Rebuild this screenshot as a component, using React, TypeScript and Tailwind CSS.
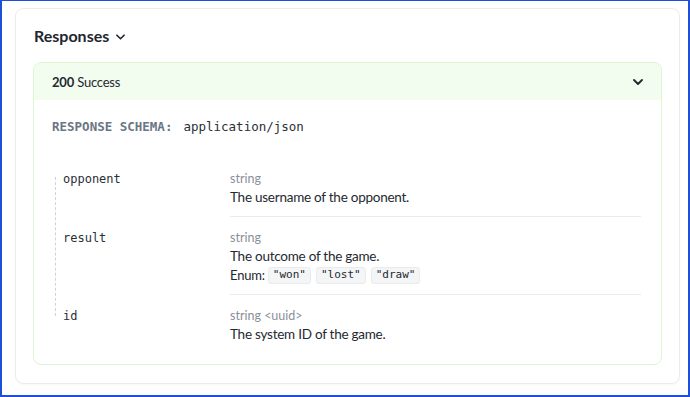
import React from 'react'

interface Field {
  name: string;
  type: string;
  format?: string;
  description: string;
  enumValues?: string[];
}

const fields: Field[] = [
  { name: 'opponent', type: 'string', description: 'The username of the opponent.' },
  { name: 'result', type: 'string', description: 'The outcome of the game.', enumValues: ['"won"', '"lost"', '"draw"'] },
  { name: 'id', type: 'string', format: '<uuid>', description: 'The system ID of the game.' },
]

const sans = "font-['Lato','Noto_Sans',sans-serif]"
const mono = "font-['DejaVu_Sans_Mono','Liberation_Mono',monospace]"

function Chevron({ className }: { className?: string }) {
  return (
    <svg className={className} viewBox="0 0 10 6" fill="none" stroke="currentColor" strokeWidth="1.8" strokeLinecap="round" strokeLinejoin="round">
      <path d="M1 1l4 4 4-4" />
    </svg>
  )
}

export default function App() {
  return (
    <div className={`h-[397px] w-[690px] box-border border-t border-l-2 border-r-2 border-b-2 border-[#1d4fd8] bg-white ${sans}`}>
      <div className="ml-[13px] mt-[7px] w-[665px] rounded-lg border border-[#ececec] px-[17px] pt-[15px] pb-[18px] shadow-[0_1px_2px_rgba(0,0,0,0.03)]">
        {/* title */}
        <div className="ml-[1px] flex items-center gap-[7px] h-6">
          <h2 className="text-[16px] font-bold text-[#1f2630]">Responses</h2>
          <Chevron className="w-[9px] h-[6px] text-[#1f2630] mt-[1px]" />
        </div>

        {/* 200 response */}
        <div className="mt-[14px] rounded-lg border border-[#dcf5d2] overflow-hidden">
          <div className="h-[37px] pt-[2px] bg-[#f2fcef] flex items-center justify-between pl-[18px] pr-[18px] text-[13px] tracking-[-0.2px] text-[#24292f]">
            <span><b className="font-bold">200</b> Success</span>
            <Chevron className="w-[10px] h-[6px] text-[#1f2630] mb-[2px]" />
          </div>

          <div className="pl-[18px] pr-[20px] pt-[17px] pb-[11px]">
            <div className={`h-5 flex items-center text-[12.5px] ${mono}`}>
              <span className="font-bold text-[#6b7685]">RESPONSE SCHEMA:</span>
              <span className="ml-[11px] text-[#2b2f36]">application/json</span>
            </div>

            <div className="mt-[21px] ml-[3px] flex">
              <div className="mt-[19px] mb-[37px] border-l border-dashed border-[#cfd3d8]" />
              <div className="flex-1">
                {fields.map((f, i) => (
                  <div key={i} className="flex">
                    <div className={`w-[174px] shrink-0 pl-[7px] pt-3 text-[12px] leading-[18px] text-[#2b2f36] ${mono}`}>
                      {f.name}
                    </div>
                    <div className={`flex-1 pt-3 ${f.enumValues ? 'pb-[9px]' : 'pb-[10px]'} ${i < fields.length - 1 ? 'border-b border-[#ebebeb]' : ''}`}>
                      <div className="text-[12.5px] leading-[18px] text-[#8a9099]">
                        {f.type}{f.format && <span> {f.format}</span>}
                      </div>
                      <div className="text-[13.5px] leading-[18px] text-[#24292f] tracking-[-0.25px]">{f.description}</div>
                      {f.enumValues && (
                        <div className="mt-[1px] flex items-center gap-[5px] h-[19px] text-[13px] tracking-[-0.2px] text-[#24292f]">
                          <span className="mr-[-2px]">Enum:</span>
                          {f.enumValues.map((v, j) => (
                            <span key={j} className={`h-[17px] flex items-center px-[4px] rounded-[3px] border border-[#ebebeb] bg-[#f4f5f6] text-[11px] tracking-normal ${mono}`}>
                              {v}
                            </span>
                          ))}
                        </div>
                      )}
                    </div>
                  </div>
                ))}
              </div>
            </div>
          </div>
        </div>
      </div>
    </div>
  )
}
